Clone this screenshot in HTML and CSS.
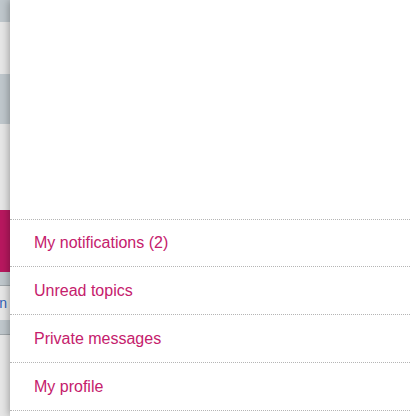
FILE: index.html
```html
<!DOCTYPE html>
<html lang="en">
<head>
<meta charset="utf-8">
<title>Menu</title>
<link rel="stylesheet" href="styles.css">
</head>
<body>
<div class="page">
  <div class="backdrop">
    <div class="band band-blue b1"></div>
    <div class="band band-light b2"></div>
    <div class="band band-blue b3"></div>
    <div class="band band-light b4"></div>
    <div class="band band-pink b5"></div>
    <div class="band band-blue b6"></div>
    <div class="band band-light b7"><span class="clip-text">n</span></div>
    <div class="band band-blue b8"></div>
    <div class="band band-light b9"></div>
  </div>
  <nav class="panel">
    <ul class="menu">
      <li class="menu-item"><a href="#">My notifications (2)</a></li>
      <li class="menu-item"><a href="#">Unread topics</a></li>
      <li class="menu-item"><a href="#">Private messages</a></li>
      <li class="menu-item"><a href="#">My profile</a></li>
    </ul>
  </nav>
</div>
</body>
</html>
```

FILE: styles.css
```css
html, body {
  margin: 0;
  padding: 0;
  height: 100%;
  background: #fff;
}
body {
  font-family: "Liberation Sans", Arial, sans-serif;
}
.page {
  display: flex;
  height: 416px;
  overflow: hidden;
}
.backdrop {
  width: 10px;
  flex: none;
  display: flex;
  flex-direction: column;
  overflow: hidden;
}
.band {
  flex: none;
}
.band-blue { background: #bfc7cc; }
.band-light { background: #e6e6e6; }
.band-pink { background: #b8185f; }
.b1 { height: 22px; }
.b2 { height: 52px; }
.b3 { height: 50px; }
.b4 { height: 86px; }
.b5 { height: 62px; }
.b6 { height: 13px; border-bottom: 1px solid #a0a7ab; }
.b7 {
  height: 34px;
  display: flex;
  align-items: center;
  justify-content: flex-end;
  font-size: 14px;
  color: #2f62b8;
}
.clip-text {
  margin-right: 3px;
  line-height: 1;
}
.b8 { height: 14px; border-bottom: 1px solid #a0a7ab; }
.b9 { flex: 1; }
.panel {
  position: relative;
  z-index: 1;
  flex: 1;
  background: #fff;
  box-shadow: -1px 0 8px rgba(0, 0, 0, 0.32);
  padding-top: 219px;
}
.menu {
  list-style: none;
  margin: 0;
  padding: 0;
  border-top: 1px dotted #b5b5b5;
}
.menu-item {
  height: 47px;
  border-bottom: 1px dotted #b5b5b5;
  display: flex;
  align-items: center;
  padding-left: 24px;
}
.menu-item:first-child {
  height: 46px;
}
.menu-item a {
  color: #c5206c;
  text-decoration: none;
  font-size: 16px;
}
```
